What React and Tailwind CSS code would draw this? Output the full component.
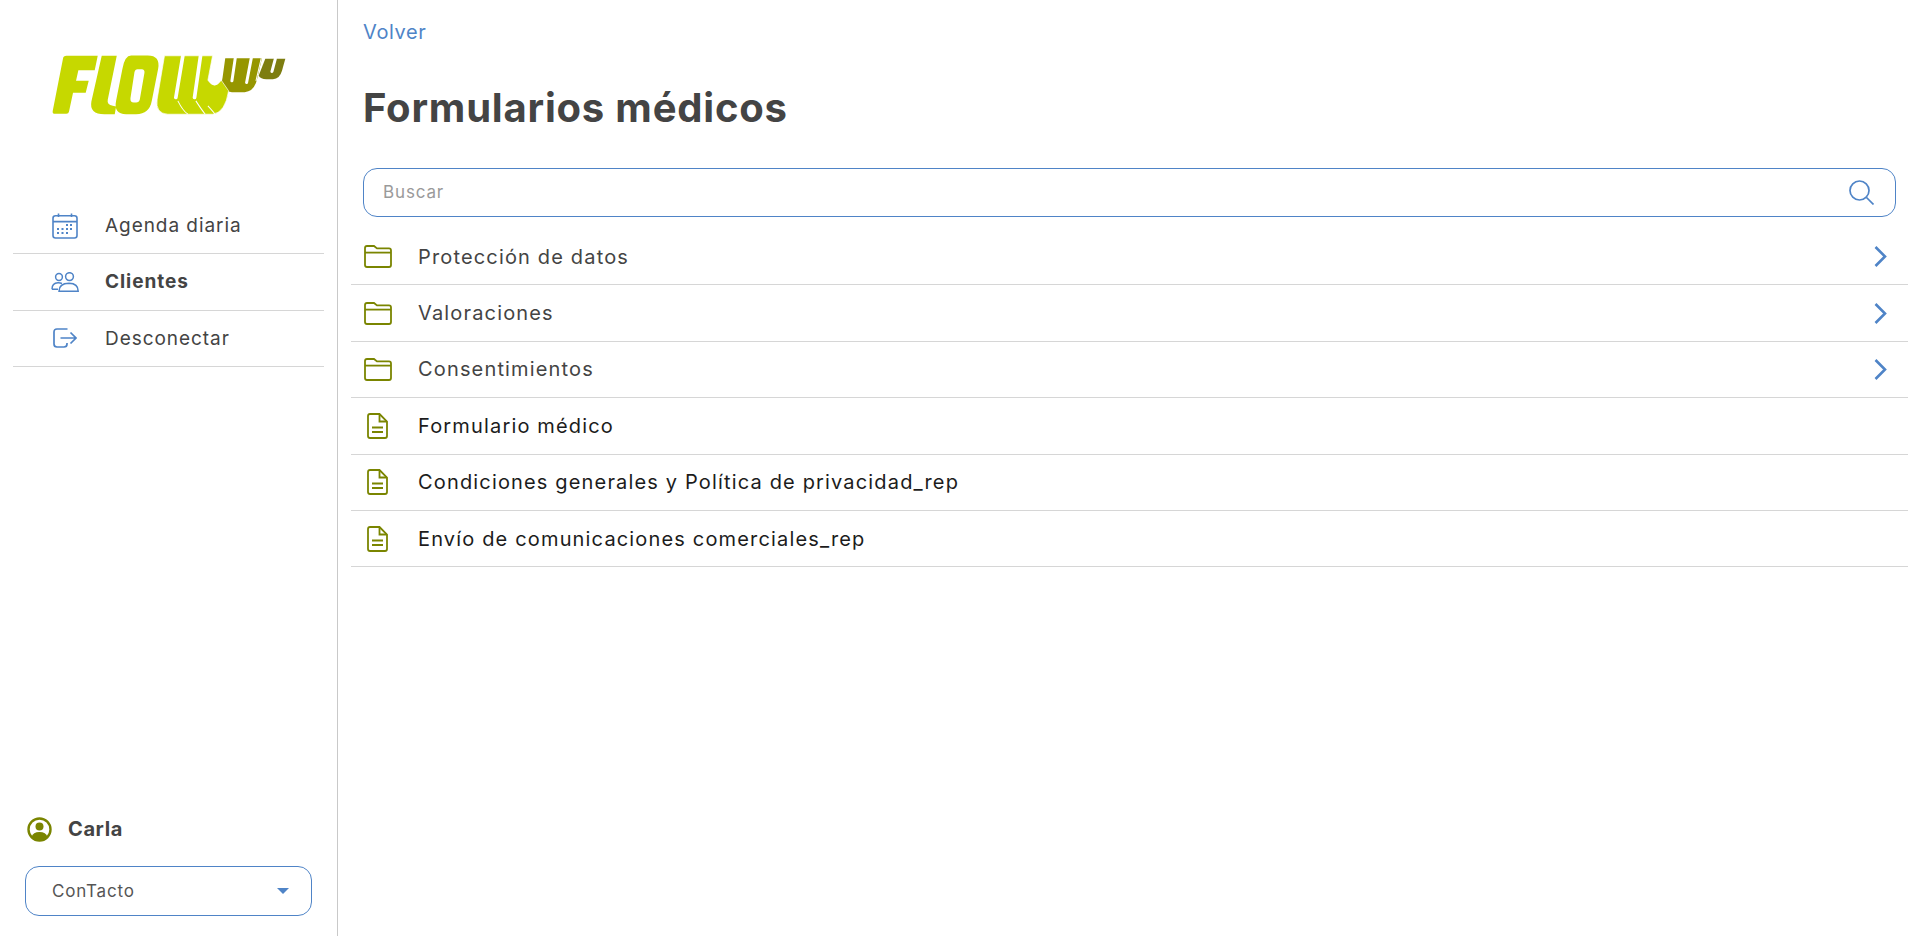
const carpetas = ['Protección de datos', 'Valoraciones', 'Consentimientos']
const documentos = [
  'Formulario médico',
  'Condiciones generales y Política de privacidad_rep',
  'Envío de comunicaciones comerciales_rep',
]

function Logo() {
  return (
    <svg viewBox="150 160 710 185" className="h-[62px] w-[237px]">
      <path d="M792 174H852L842 210Q835 235 815 235H795Q778 235 772 225Z" fill="#7d7d10" />
      <path d="M672 172H782L768 232Q760 272 730 274H692Q655 270 664 230Z" fill="#969600" />
      <path d="M702 172L692 240M750 172L736 245M822 174L812 212" stroke="#fff" strokeWidth="9" strokeLinecap="round" fill="none" />
      <path d="M780 172L764 240" stroke="#fff" strokeWidth="3" fill="none" />
      <g fill="#c6d800">
        <path d="M196 165H290L281 208H232L225 240H263L254 276H216L204 332Q203 339 196 339H162Q154 339 155 331L186 173Q187 165 196 165Z" />
        <path d="M302 165H347L320 297Q317 312 335 315L345 317L341 340H310Q264 340 271 302Z" />
        <path fillRule="evenodd" d="M390 164H440Q478 164 471 204L452 300Q445 340 405 340H375Q337 340 345 300L364 204Q371 164 390 164ZM409 205Q402 205 400 214L388 292Q387 305 398 305H405Q414 305 416 296L430 216Q431 205 422 205Z" />
      </g>
      <path
        d="M490 165H634L620 238Q640 268 660 238L682 270Q672 335 635 340H500Q462 338 468 295Z"
        fill="#c6d800"
        stroke="#fff"
        strokeWidth="2"
      />
      <path d="M545 165L524 290M598 165L580 290" stroke="#fff" strokeWidth="11" strokeLinecap="round" fill="none" />
      <path d="M530 300Q545 330 560 340M584 300Q600 325 612 340M620 315Q632 328 642 340" stroke="#fff" strokeWidth="3" fill="none" />
    </svg>
  )
}

function IconoCalendario() {
  return (
    <svg viewBox="0 0 26 26" className="h-[26px] w-[26px]" fill="none" stroke="#4f84c7" strokeWidth="1.6">
      <rect x="1" y="2.8" width="24" height="22.2" rx="2.5" />
      <path d="M1 8.6H25M6.5 0.5V4M19.5 0.5V4" />
      <g fill="#4f84c7" stroke="none">
        <rect x="14" y="11" width="2" height="2" />
        <rect x="18" y="11" width="2" height="2" />
        <rect x="5" y="15" width="2" height="2" />
        <rect x="9.5" y="15" width="2" height="2" />
        <rect x="14" y="15" width="2" height="2" />
        <rect x="18" y="15" width="2" height="2" />
        <rect x="5" y="19" width="2" height="2" />
        <rect x="9.5" y="19" width="2" height="2" />
        <rect x="14" y="19" width="2" height="2" />
      </g>
    </svg>
  )
}

function IconoClientes() {
  return (
    <svg viewBox="0 0 28 20" className="h-[20px] w-[28px]" fill="none" stroke="#4f84c7" strokeWidth="1.5">
      <circle cx="8" cy="5" r="3.4" />
      <circle cx="18.5" cy="4.6" r="3.9" />
      <path d="M1 17.2Q1 11 7 10.8Q9 10.7 11 11.5M7 17.2H1" />
      <path d="M8 19.2Q8 11.5 18 11.3Q27.2 11.5 27.2 19.2Z" />
    </svg>
  )
}

function IconoSalir() {
  return (
    <svg viewBox="0 0 24 20" className="h-[20px] w-[24px]" fill="none" stroke="#4f84c7" strokeWidth="1.7">
      <path d="M14.5 1H4Q1 1 1 4V16Q1 19 4 19H11Q14 19 14 16V15" />
      <path d="M7.5 10H23M17.5 4.5L23 10L17.5 15.5" />
    </svg>
  )
}

function IconoCarpeta() {
  return (
    <svg viewBox="0 0 28 23" className="h-[23px] w-[28px]" fill="none" stroke="#7a8500" strokeWidth="1.8">
      <path d="M1 3Q1 1 3 1H10L13 3.4H25Q27 3.4 27 5.4V20Q27 22 25 22H3Q1 22 1 20Z" />
      <path d="M1 7.6H27" />
    </svg>
  )
}

function IconoDocumento() {
  return (
    <svg viewBox="0 0 21 26" className="h-[26px] w-[21px]" fill="none" stroke="#7a8500" strokeWidth="1.8">
      <path d="M3 1H12.5L20 8.5V23Q20 25 18 25H3Q1 25 1 23V3Q1 1 3 1Z" />
      <path d="M12.5 1V8.5H20M5 14.5H16M5 19H16" />
    </svg>
  )
}

function IconoBuscar() {
  return (
    <svg viewBox="0 0 25 25" className="h-[25px] w-[25px]" fill="none" stroke="#4f84c7" strokeWidth="1.7">
      <circle cx="10.5" cy="10.5" r="9.5" />
      <path d="M17.5 17.5L24.5 24.5" />
    </svg>
  )
}

function Flecha() {
  return (
    <svg viewBox="0 0 13 21" className="h-[21px] w-[13px]" fill="none" stroke="#4f84c7" strokeWidth="2.6">
      <path d="M1.5 1L11 10.5L1.5 20" />
    </svg>
  )
}

function ItemMenu({ icono, texto, activo }) {
  return (
    <a className="flex h-[56.4px] items-center border-b border-[#d6d6d6]">
      <span className="flex w-[92px] pl-[38px]">
        <span className="flex w-[28px] shrink-0 justify-center">{icono}</span>
      </span>
      <span className={`pt-[1px] text-[19px] tracking-[0.05em] text-[#444444] ${activo ? 'font-bold' : 'font-normal'}`}>{texto}</span>
    </a>
  )
}

function FilaLista({ icono, texto, carpeta }) {
  return (
    <div className="flex h-[56.4px] items-center border-b border-[#d6d6d6] pr-[21px]">
      <span className="flex w-[67px] pl-[13px]">{icono}</span>
      <span className={`flex-1 text-[20px] tracking-[0.058em] ${carpeta ? 'text-[#444444]' : 'text-[#1c1c1c]'}`}>{texto}</span>
      {carpeta ? <Flecha /> : null}
    </div>
  )
}

export default function App() {
  return (
    <div className="flex h-screen bg-white font-['Inter',sans-serif]">
      <aside className="flex w-[338px] shrink-0 flex-col border-r border-[#c9c9c9] pb-[20px]">
        <div className="pl-[51px] pt-[54px]">
          <Logo />
        </div>
        <nav className="mx-[13px] mt-[82px]">
          <ItemMenu icono={<IconoCalendario />} texto="Agenda diaria" />
          <ItemMenu icono={<IconoClientes />} texto="Clientes" activo />
          <ItemMenu icono={<IconoSalir />} texto="Desconectar" />
        </nav>
        <div className="mt-auto px-[25px]">
          <div className="flex items-center gap-[16px] pl-[2px]">
            <svg viewBox="0 0 25 25" className="h-[25px] w-[25px]">
              <circle cx="12.5" cy="12.5" r="11" fill="none" stroke="#7a8500" strokeWidth="2.4" />
              <circle cx="12.5" cy="9.6" r="4" fill="#7a8500" />
              <path d="M4.5 20Q6 15 12.5 15Q19 15 20.5 20Q17 24 12.5 24Q8 24 4.5 20Z" fill="#7a8500" />
            </svg>
            <span className="text-[20px] font-bold tracking-[0.03em] text-[#444444]">Carla</span>
          </div>
          <div className="mt-[22px] flex h-[50px] w-[287px] items-center justify-between rounded-[14px] border border-[#4f84c7] pl-[26px] pr-[22px]">
            <span className="pt-[1px] text-[17px] tracking-[0.05em] text-[#555555]">ConTacto</span>
            <span className="h-0 w-0 border-x-[6px] border-t-[6px] border-x-transparent border-t-[#4f84c7]" />
          </div>
        </div>
      </aside>

      <main className="flex-1 pl-[13px] pr-[12px]">
        <div className="px-[12px]">
          <a className="block pt-[20px] text-[20px] leading-[24px] tracking-[0.03em] text-[#4f84c7]">Volver</a>
          <h1 className="mt-[41px] text-[40px] font-bold leading-[46px] tracking-[0.02em] text-[#444444]">Formularios médicos</h1>
          <div className="mt-[37px] flex h-[49px] items-center justify-between rounded-[14px] border border-[#4f84c7] pl-[19px] pr-[21px]">
            <span className="pt-[1px] text-[17px] tracking-[0.05em] text-[#9a9a9a]">Buscar</span>
            <IconoBuscar />
          </div>
        </div>
        <div className="mt-[12px]">
          {carpetas.map((nombre) => (
            <FilaLista key={nombre} icono={<IconoCarpeta />} texto={nombre} carpeta />
          ))}
          {documentos.map((nombre) => (
            <FilaLista
              key={nombre}
              icono={
                <span className="pl-[3px]">
                  <IconoDocumento />
                </span>
              }
              texto={nombre}
            />
          ))}
        </div>
      </main>
    </div>
  )
}
